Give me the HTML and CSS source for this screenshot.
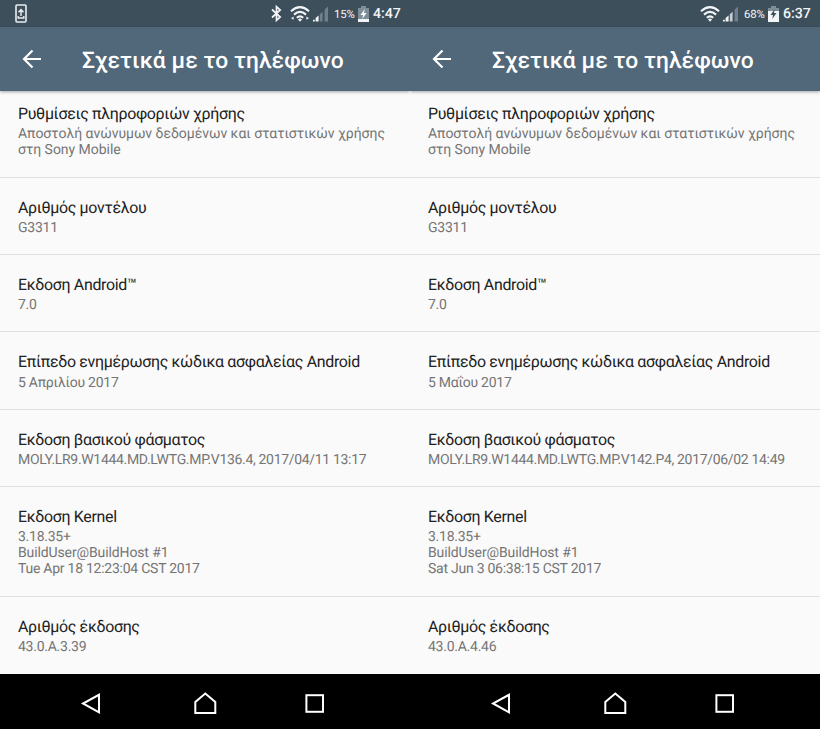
FILE: index.html
```html
<!DOCTYPE html>
<html lang="el">
<head>
<meta charset="utf-8">
<title>Σχετικά με το τηλέφωνο</title>
<link rel="stylesheet" href="styles.css">
</head>
<body>
<svg class="defs" width="0" height="0">
  <symbol id="back" viewBox="0 0 20 20"><path d="M19 10H2M10.5 1.5L2 10L10.5 18.5" fill="none" stroke="#fff" stroke-width="2.2"/></symbol>
  <symbol id="wifi" viewBox="0 0 20 16"><g fill="none" stroke="#f2f5f7" stroke-width="2.1"><path d="M1 5.2Q10-2.8 19 5.2"/><path d="M4 8.6Q10 3.2 16 8.6"/><path d="M6.8 11.8Q10 9 13.2 11.8"/></g><path d="M8 13.4Q10 11.8 12 13.4L10 15.8Z" fill="#f2f5f7"/></symbol>
  <symbol id="nav-back" viewBox="0 0 24 24"><path d="M16 3.8V21.3L0 12.5Z" fill="none" stroke="#fff" stroke-width="2"/></symbol>
  <symbol id="nav-home" viewBox="0 0 24 24"><path d="M2.3 22V11L12.3 2.5L22.3 11V22Z" fill="none" stroke="#fff" stroke-width="2"/></symbol>
  <symbol id="nav-recent" viewBox="0 0 24 24"><rect x="3.4" y="4.2" width="16.6" height="16.6" fill="none" stroke="#fff" stroke-width="2"/></symbol>
</svg>
<main class="screens">
  <section class="phone">
    <div class="status">
      <svg class="update" width="12" height="19" viewBox="0 0 12 19"><rect x="1" y="1" width="10" height="17" rx="1" fill="none" stroke="#e9eef1" stroke-width="1.6"/><path d="M6 12V6M3.5 8.2L6 5.5L8.5 8.2M3.2 12V14H8.8V12" fill="none" stroke="#e9eef1" stroke-width="1.4"/></svg>
      <svg class="bluetooth" width="11" height="17" viewBox="0 0 11 17"><path d="M1 4.5L9.2 12L5.5 15.3V1.7L9.2 5L1 12.5" fill="none" stroke="#f2f5f7" stroke-width="1.7"/></svg>
      <svg class="wifi" width="20" height="16" viewBox="0 0 20 16"><use href="#wifi"/><path d="M1 12.2L3.6 10.6V13.8ZM19 12.2L16.4 10.6V13.8Z" fill="#f2f5f7"/></svg>
      <svg class="signal" width="16" height="16" viewBox="0 0 16 16"><path d="M0 13.8H1.8V15.5H0ZM2.6 15.5V12L5.6 9.4V15.5Z" fill="#f2f5f7"/><path d="M6.8 8.3L9.6 5.7V15.5H6.8ZM11.6 3.8L15 .5V15.5H11.6Z" fill="#70818d"/></svg>
      <span class="percent">15%</span>
      <svg class="battery" width="11" height="16" viewBox="0 0 11 16"><path d="M0 2H3V0H8V2H11V13H0Z" fill="#7e8e99"/><path d="M0 13H11V16H0Z" fill="#f2f5f7"/><path d="M6.7 3L2.5 9H5L4.3 13L8.5 7H6Z" fill="#fff"/></svg>
      <span class="clock">4:47</span>
    </div>
    <header class="bar"><svg class="arrow" width="20" height="20"><use href="#back"/></svg><h1>Σχετικά με το τηλέφωνο</h1></header>
    <ul class="list">
      <li class="first"><h2>Ρυθμίσεις πληροφοριών χρήσης</h2><p class="usage">Αποστολή ανώνυμων δεδομένων και στατιστικών χρήσης<br>στη Sony Mobile</p></li>
      <li><h2>Αριθμός μοντέλου</h2><p>G3311</p></li>
      <li><h2>Εκδοση Android™</h2><p>7.0</p></li>
      <li><h2>Επίπεδο ενημέρωσης κώδικα ασφαλείας Android</h2><p>5 Απριλίου 2017</p></li>
      <li><h2>Εκδοση βασικού φάσματος</h2><p class="baseband">MOLY.LR9.W1444.MD.LWTG.MP.V136.4, 2017/04/11 13:17</p></li>
      <li><h2>Εκδοση Kernel</h2><p>3.18.35+<br><span class="build">BuildUser@BuildHost #1</span><br>Tue Apr 18 12:23:04 CST 2017</p></li>
      <li><h2>Αριθμός έκδοσης</h2><p>43.0.A.3.39</p></li>
    </ul>
    <nav class="nav"><svg><use href="#nav-back"/></svg><svg><use href="#nav-home"/></svg><svg><use href="#nav-recent"/></svg></nav>
  </section>
  <section class="phone">
    <div class="status">
      <svg class="wifi push" width="20" height="16"><use href="#wifi"/></svg>
      <svg class="signal" width="16" height="16" viewBox="0 0 16 16"><path d="M0 13.8H1.8V15.5H0ZM2.6 15.5V12L5.6 9.4V15.5Z" fill="#f2f5f7"/><path d="M6.8 8.3L9.6 5.7V15.5H6.8Z" fill="#c5cdd2"/><path d="M11.6 3.8L15 .5V15.5H11.6Z" fill="#70818d"/></svg>
      <span class="percent">68%</span>
      <svg class="battery" width="11" height="16" viewBox="0 0 11 16"><path d="M0 2H3V0H8V2H11V5H0Z" fill="#7e8e99"/><path d="M0 5H11V16H0Z" fill="#f2f5f7"/><path d="M6.7 3L2.5 9H5L4.3 13L8.5 7H6Z" fill="#3e4f5c"/></svg>
      <span class="clock">6:37</span>
    </div>
    <header class="bar"><svg class="arrow" width="20" height="20"><use href="#back"/></svg><h1>Σχετικά με το τηλέφωνο</h1></header>
    <ul class="list">
      <li class="first"><h2>Ρυθμίσεις πληροφοριών χρήσης</h2><p class="usage">Αποστολή ανώνυμων δεδομένων και στατιστικών χρήσης<br>στη Sony Mobile</p></li>
      <li><h2>Αριθμός μοντέλου</h2><p>G3311</p></li>
      <li><h2>Εκδοση Android™</h2><p>7.0</p></li>
      <li><h2>Επίπεδο ενημέρωσης κώδικα ασφαλείας Android</h2><p>5 Μαΐου 2017</p></li>
      <li><h2>Εκδοση βασικού φάσματος</h2><p class="baseband">MOLY.LR9.W1444.MD.LWTG.MP.V142.P4, 2017/06/02 14:49</p></li>
      <li><h2>Εκδοση Kernel</h2><p>3.18.35+<br><span class="build">BuildUser@BuildHost #1</span><br>Sat Jun 3 06:38:15 CST 2017</p></li>
      <li><h2>Αριθμός έκδοσης</h2><p>43.0.A.4.46</p></li>
    </ul>
    <nav class="nav"><svg><use href="#nav-back"/></svg><svg><use href="#nav-home"/></svg><svg><use href="#nav-recent"/></svg></nav>
  </section>
</main>
</body>
</html>
```
FILE: styles.css
```css
* { box-sizing: border-box; margin: 0; padding: 0; }
body { width: 820px; height: 729px; overflow: hidden; background: #fafafa; font-family: Roboto, "Noto Sans", sans-serif; text-rendering: geometricPrecision; }
svg { flex: none; display: block; overflow: visible; }
.defs { position: absolute; }
symbol { overflow: visible; }
.screens { display: grid; grid-template-columns: 410px 410px; height: 729px; }
.phone { display: flex; flex-direction: column; height: 729px; min-width: 0; overflow: hidden; }
.status { height: 27px; flex: none; display: flex; align-items: center; padding: 0 9px 0 15px; background: #3e4f5c; color: #f2f5f7; }
.bluetooth { margin: 0 8px 0 auto; }
.push { margin-left: auto; }
.signal { margin-left: 3px; }
.percent { width: 21px; margin-left: 5px; font-size: 11.4px; letter-spacing: -.15px; white-space: nowrap; }
.battery { margin-left: 3px; }
.clock { width: 28px; margin-left: 4px; font-size: 14.2px; font-weight: 500; white-space: nowrap; }
.bar { position: relative; height: 64px; flex: none; display: flex; align-items: center; padding: 0 0 0 22px; background: #51677a; color: #fff; box-shadow: 0 1px 3px rgba(0, 0, 0, .35); }
.arrow { margin-right: 40px; }
h1 { font-size: 22.8px; line-height: 28px; padding-top: 3px; font-weight: 500; letter-spacing: .08px; white-space: nowrap; }
.list { flex: 1; list-style: none; }
.list li { padding: 21px 0 18.2px 18px; border-bottom: 1px solid #e0e0e0; }
.list li.first { padding-top: 14.2px; }
.list li:last-child { border-bottom: 0; }
h2 { font-size: 15.95px; line-height: 18.7px; margin-bottom: 2.5px; font-weight: 400; letter-spacing: -.32px; color: #212121; white-space: nowrap; }
p { font-size: 14px; line-height: 16px; letter-spacing: -.25px; color: #757575; white-space: nowrap; }
.usage { letter-spacing: -.03px; }
.baseband { letter-spacing: -.32px; }
.build { letter-spacing: -.12px; }
.nav { height: 55px; flex: none; display: flex; justify-content: center; gap: 86px; padding-top: 17px; background: #000; }
.nav svg { width: 24px; height: 24px; }
```
